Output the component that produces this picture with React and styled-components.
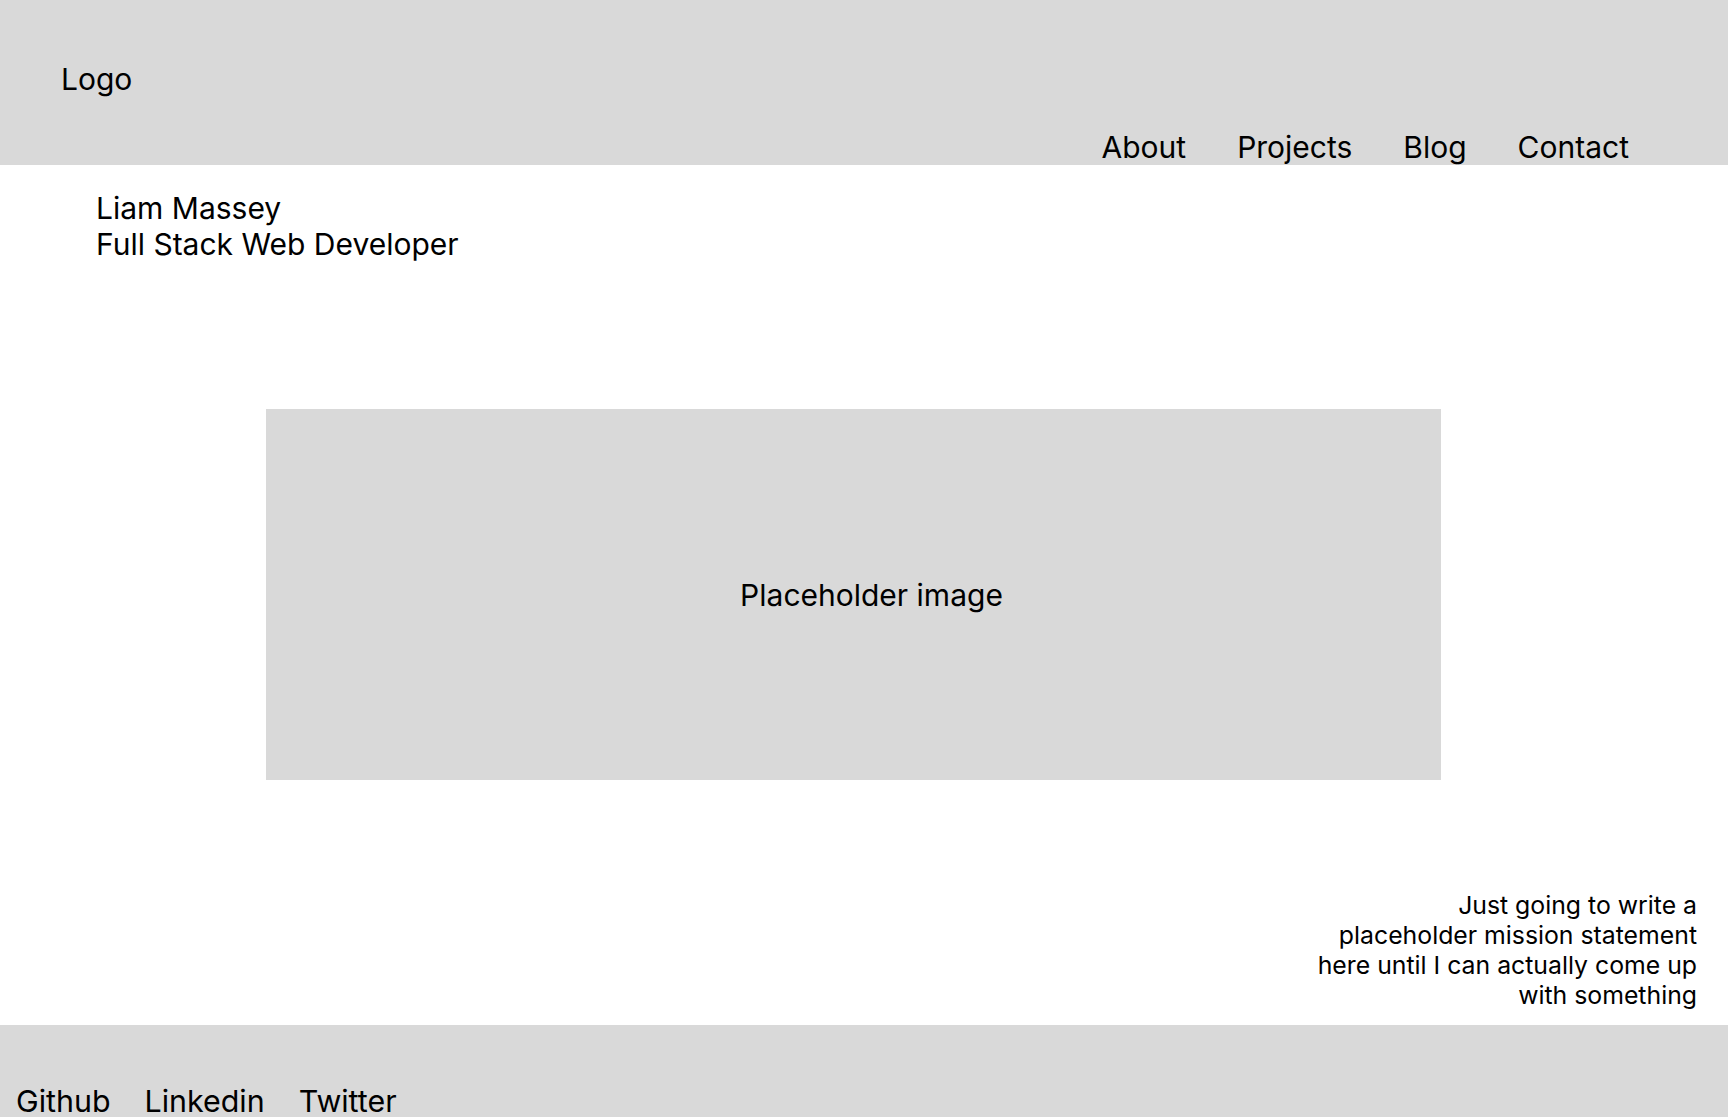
import React from 'react';
import styled, { createGlobalStyle } from 'styled-components';

const GlobalStyle = createGlobalStyle`
  body {
    margin: 0;
    font-family: Inter, "Noto Sans", sans-serif;
    color: #000;
    background: #fff;
  }
`;

const Header = styled.header`
  height: 165px;
  background: #d9d9d9;
  display: flex;
  justify-content: space-between;
  padding: 0 99px 0 61px;
`;

const Logo = styled.div`
  font-size: 30px;
  line-height: 36px;
  margin-top: 61px;
`;

const Nav = styled.nav`
  align-self: flex-end;
  display: flex;
  gap: 51px;
  font-size: 30px;
  line-height: 36px;
`;

const NavLink = styled.a`
  color: inherit;
  text-decoration: none;
`;

const Intro = styled.section`
  padding: 25px 0 0 96px;
  font-size: 30px;
  line-height: 36px;
`;

const ImageBox = styled.div`
  margin: 147px 0 0 266px;
  width: 1175px;
  height: 371px;
  box-sizing: border-box;
  padding-left: 36px;
  background: #d9d9d9;
  display: flex;
  align-items: center;
  justify-content: center;
  font-size: 30px;
`;

const Mission = styled.p`
  margin: 110px 31px 0 auto;
  width: 420px;
  text-align: right;
  font-size: 24.8px;
  line-height: 30px;
`;

const Footer = styled.footer`
  margin-top: 15px;
  background: #d9d9d9;
  padding: 58px 16px 40px;
  display: flex;
  gap: 34px;
  font-size: 30.4px;
  line-height: 36px;
`;

export default function App() {
  return (
    <>
      <GlobalStyle />
      <Header>
        <Logo>Logo</Logo>
        <Nav>
          {['About', 'Projects', 'Blog', 'Contact'].map((item) => (
            <NavLink key={item} href="#">{item}</NavLink>
          ))}
        </Nav>
      </Header>
      <Intro>
        <div>Liam Massey</div>
        <div>Full Stack Web Developer</div>
      </Intro>
      <ImageBox>Placeholder image</ImageBox>
      <Mission>
        Just going to write a<br />
        placeholder mission statement<br />
        here until I can actually come up<br />
        with something
      </Mission>
      <Footer>
        {['Github', 'Linkedin', 'Twitter'].map((item) => (
          <NavLink key={item} href="#">{item}</NavLink>
        ))}
      </Footer>
    </>
  );
}
